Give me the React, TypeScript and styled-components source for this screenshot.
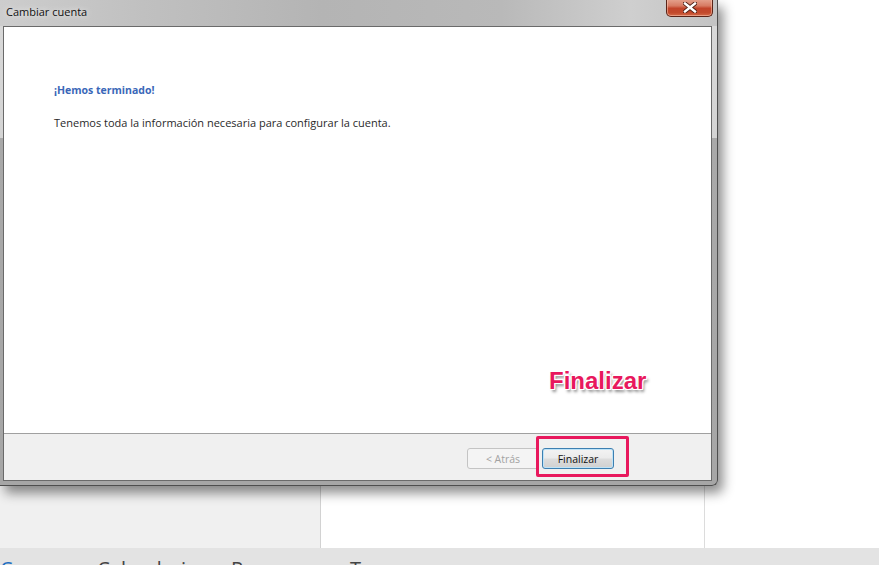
import React from 'react';
import styled, { createGlobalStyle } from 'styled-components';

const GlobalStyle = createGlobalStyle`
  html, body {
    margin: 0;
    padding: 0;
    background: #ffffff;
  }
  body {
    font-family: 'Liberation Sans', Arial, sans-serif;
  }
`;

const Desktop = styled.div`
  position: relative;
  width: 879px;
  height: 565px;
  overflow: hidden;
  display: flex;
  flex-direction: column;
  background: #ffffff;
`;

const Workspace = styled.div`
  flex: 1 1 auto;
  display: flex;
`;

const SidePane = styled.div`
  width: 320px;
  background: #f0f0f0;
  border-right: 1px solid #d2d2d2;
`;

const ReadingPane = styled.div`
  width: 383px;
  background: #ffffff;
  border-right: 1px solid #dcdcdc;
`;

const NavBar = styled.div`
  height: 17px;
  flex: 0 0 17px;
  background: #e3e3e3;
  display: flex;
  gap: 33px;
  padding: 11px 0 0 0;
  box-sizing: border-box;
  overflow: hidden;
  font-family: 'Open Sans', 'Liberation Sans', sans-serif;
  font-size: 20px;
  line-height: 20px;
`;

const NavItem = styled.span<{ $active?: boolean }>`
  color: ${({ $active }) => ($active ? '#1e6fc0' : '#444444')};
  white-space: nowrap;
`;

const Window = styled.div`
  position: absolute;
  left: 0;
  top: 0;
  width: 718px;
  height: 486px;
  box-sizing: border-box;
  display: flex;
  flex-direction: column;
  padding: 0 5px 4px 3px;
  background: linear-gradient(to bottom, #d9d9d9 0, #d4d4d4 138px, #a9a9a9 138px, #a6a6a6 100%);
  border-right: 1px solid #4e4e4e;
  border-bottom: 1px solid #4e4e4e;
  border-bottom-right-radius: 6px;
  box-shadow: 5px 7px 12px rgba(0, 0, 0, 0.45);
`;

const TitleBar = styled.div`
  position: relative;
  height: 26px;
  flex: 0 0 26px;
  margin: 0 -5px 0 -3px;
  padding-left: 6px;
  display: flex;
  align-items: center;
  background: linear-gradient(
    to right,
    #cdcdcd 0%,
    #c0c0c0 20%,
    #b4b4b4 45%,
    #b9b9b9 70%,
    #cfcfcf 88%,
    #c3c3c3 100%
  );
`;

const Title = styled.span`
  font-family: 'Open Sans', 'Liberation Sans', sans-serif;
  font-size: 11px;
  color: #111111;
  margin-top: -3px;
  text-shadow: 0 0 6px rgba(255, 255, 255, 0.9);
`;

const CloseButton = styled.div`
  position: absolute;
  top: -1px;
  right: 4px;
  width: 47px;
  height: 18px;
  box-sizing: border-box;
  border: 1px solid #5a2418;
  border-top: none;
  border-radius: 0 0 5px 5px;
  background: linear-gradient(to bottom, #e6a591 0%, #d77b63 40%, #c2442a 55%, #c24a2c 80%, #d46a48 100%);
  box-shadow: inset 0 0 0 1px rgba(255, 210, 190, 0.5);
  display: flex;
  align-items: center;
  justify-content: center;
`;

const Client = styled.div`
  flex: 1 1 auto;
  display: flex;
  flex-direction: column;
  border: 1px solid #6a6a6a;
  background: #f0f0f0;
`;

const Content = styled.div`
  flex: 1 1 auto;
  background: #ffffff;
  border-bottom: 1px solid #a0a0a0;
  padding: 56px 0 0 50px;
`;

const Heading = styled.div`
  font-family: 'Open Sans', 'Liberation Sans', sans-serif;
  font-size: 10.5px;
  font-weight: 700;
  color: #3a67b8;
  line-height: 14px;
`;

const Body = styled.div`
  margin-top: 19px;
  font-family: 'Open Sans', 'Liberation Sans', sans-serif;
  font-size: 11px;
  color: #2a2a2a;
  line-height: 14px;
`;

const Footer = styled.div`
  height: 46px;
  flex: 0 0 46px;
  display: flex;
  align-items: flex-start;
  justify-content: flex-end;
  gap: 3px;
  padding: 14px 97px 0 0;
  box-sizing: border-box;
`;

const Button = styled.button<{ $primary?: boolean }>`
  width: 72px;
  height: 21px;
  box-sizing: border-box;
  border-radius: 3px;
  font-family: 'Open Sans', 'Liberation Sans', sans-serif;
  font-size: 10.5px;
  padding: 0;
  border: 1px solid ${({ $primary }) => ($primary ? '#3c7fb1' : '#c4c4c4')};
  color: ${({ $primary }) => ($primary ? '#111111' : '#a2a2a2')};
  background: ${({ $primary }) =>
    $primary
      ? 'linear-gradient(to bottom, #f3f3f3 0%, #ebebeb 48%, #dddddd 52%, #d0d0d0 100%)'
      : '#f4f4f4'};
  box-shadow: ${({ $primary }) => ($primary ? 'inset 0 0 0 1px #bfe3f7' : 'none')};
`;

const Highlight = styled.div`
  position: absolute;
  left: 536px;
  top: 436px;
  width: 93px;
  height: 41px;
  box-sizing: border-box;
  border: 3px solid #e8185d;
  border-radius: 2px;
`;

const Callout = styled.div`
  position: absolute;
  left: 549px;
  top: 367px;
  font-family: 'Liberation Sans', Arial, sans-serif;
  font-size: 24px;
  font-weight: 700;
  color: #e8185d;
  text-shadow:
    -1px -1px 0 #fff, 1px -1px 0 #fff, -1px 1px 0 #fff, 1px 1px 0 #fff,
    0 -1px 0 #fff, 0 1px 0 #fff, -1px 0 0 #fff, 1px 0 0 #fff,
    2px 3px 3px rgba(0, 0, 0, 0.45);
`;

const CloseGlyph = () => (
  <svg width="14" height="11" viewBox="0 0 14 11">
    <path d="M2 1.5 L12 9.5 M12 1.5 L2 9.5" stroke="#4a1c12" strokeWidth="4.2" strokeLinecap="square" />
    <path d="M2 1.5 L12 9.5 M12 1.5 L2 9.5" stroke="#ffffff" strokeWidth="2.4" strokeLinecap="square" />
  </svg>
);

const App = () => {
  return (
    <>
      <GlobalStyle />
      <Desktop>
        <Workspace>
          <SidePane />
          <ReadingPane />
        </Workspace>
        <NavBar>
          <NavItem $active>Correo</NavItem>
          <NavItem>Calendario</NavItem>
          <NavItem>Personas</NavItem>
          <NavItem>Tareas</NavItem>
        </NavBar>

        <Window>
          <TitleBar>
            <Title>Cambiar cuenta</Title>
            <CloseButton>
              <CloseGlyph />
            </CloseButton>
          </TitleBar>
          <Client>
            <Content>
              <Heading>¡Hemos terminado!</Heading>
              <Body>Tenemos toda la información necesaria para configurar la cuenta.</Body>
            </Content>
            <Footer>
              <Button disabled>&lt; Atrás</Button>
              <Button $primary>Finalizar</Button>
            </Footer>
          </Client>
        </Window>

        <Callout>Finalizar</Callout>
        <Highlight />
      </Desktop>
    </>
  );
};

export default App;
